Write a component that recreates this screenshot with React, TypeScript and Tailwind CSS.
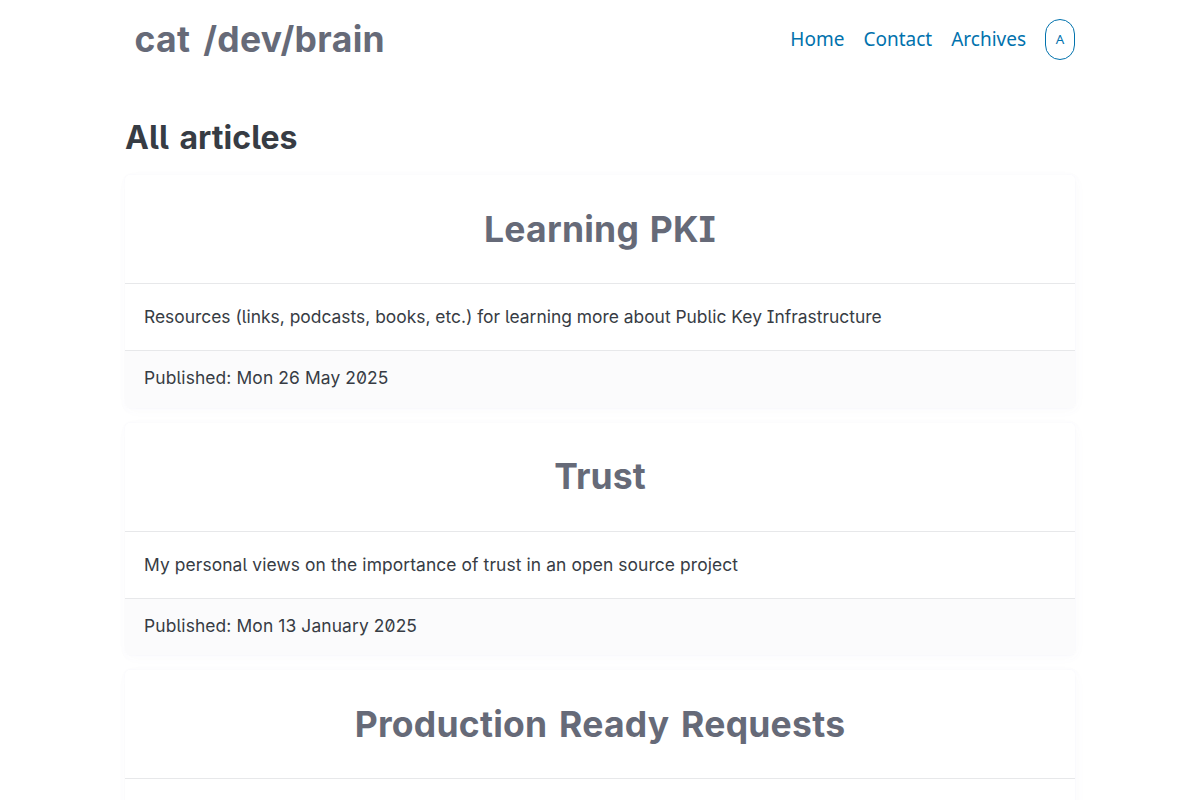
const articles = [
  {
    title: "Learning PKI",
    titleSpacing: "tracking-[0.25px] [word-spacing:2px]",
    summary: "Resources (links, podcasts, books, etc.) for learning more about Public Key Infrastructure",
    summarySpacing: "tracking-[0.005px]",
    published: "Mon 26 May 2025",
  },
  {
    title: "Trust",
    titleSpacing: "tracking-[0.1px]",
    summary: "My personal views on the importance of trust in an open source project",
    summarySpacing: "tracking-[0.1px]",
    published: "Mon 13 January 2025",
  },
  {
    title: "Production Ready Requests",
    titleSpacing: "tracking-[0.25px] [word-spacing:3px]",
  },
];

export default function App() {
  return (
    <div className="h-screen overflow-hidden bg-white text-[#373c44] font-['Inter',sans-serif] [font-feature-settings:'zero','cv05','cv08']">
      <div className="w-[950px] mx-auto">
        {/* Header */}
        <header className="h-[79px] flex items-center justify-between">
          <a href="#" className="ml-[9.5px] text-[35.5px] leading-[46px] font-bold text-[#666a78] tracking-[0.35px] [word-spacing:4px] whitespace-nowrap">
            cat /dev/brain
          </a>
          <nav className="flex items-center gap-[19px] text-[19px] text-[#0172ad] font-['Noto_Sans',sans-serif]">
            <a href="#">Home</a>
            <a href="#">Contact</a>
            <a href="#">Archives</a>
            <button className="w-[30px] h-[41px] border border-[#0172ad] rounded-[15px] text-[13.3px]">A</button>
          </nav>
        </header>

        <main>
          <h1 className="mt-[38px] h-[58px] text-[32px] leading-[42px] font-bold tracking-[0.05px] [word-spacing:3px] whitespace-nowrap">
            All articles
          </h1>

          {articles.map((article) => (
            <article
              key={article.title}
              className="h-[232.6px] mb-[15px] rounded-[5px] bg-white overflow-hidden shadow-[0.6px_1.3px_7.6px_rgba(129,145,181,0.024),1.2px_2.4px_14px_rgba(129,145,181,0.02),0_0_0_1px_rgba(129,145,181,0.015)]"
            >
              <div className="h-[109px] pt-px flex items-center justify-center border-b border-[#e7e8ea]">
                <h2 className={`text-[35.5px] leading-[46px] font-bold text-[#666a78] whitespace-nowrap ${article.titleSpacing}`}>
                  {article.title}
                </h2>
              </div>
              <p className={`h-[66px] px-[19px] pt-[19px] text-[17.4px] leading-[28px] whitespace-nowrap ${article.summarySpacing ?? ""}`}>
                {article.summary}
              </p>
              {article.published && (
                <footer className="h-[58px] px-[19px] pt-[13px] text-[17.4px] leading-[28px] tracking-[0.12px] border-t border-[#e7e8ea] bg-[#fbfbfc]">
                  Published: {article.published}
                </footer>
              )}
            </article>
          ))}
        </main>
      </div>
    </div>
  );
}
